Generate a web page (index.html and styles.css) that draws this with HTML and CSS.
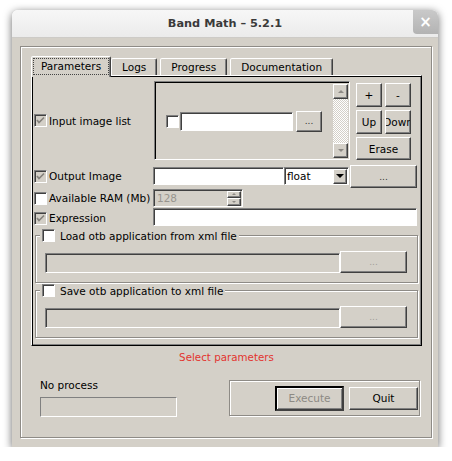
FILE: index.html
```html
<!DOCTYPE html>
<html>
<head>
<meta charset="utf-8">
<title>Band Math - 5.2.1</title>
<link rel="stylesheet" href="styles.css">
</head>
<body>
<div class="window">
	<div class="titlebar">
		<span class="title">Band Math – 5.2.1</span>
		<span class="close">×</span>
	</div>
	<div class="client">
		<div class="frame">
			<div class="tabs">
				<div class="tab active"><span class="focus">Parameters</span></div>
				<div class="tab">Logs</div>
				<div class="tab">Progress</div>
				<div class="tab">Documentation</div>
			</div>
			<div class="pane">
				<div class="form">
					<!-- input image list -->
					<label class="lbl tall"><span class="cb dis"><svg viewBox="0 0 11 11" width="11" height="11"><polyline points="2,5 4,7.5 9,2.5"/></svg></span>Input image list</label>
					<div class="listbox sunk">
						<div class="list-item">
							<span class="cb"></span>
							<span class="edit sunk item-edit"></span>
							<span class="btn dots item-btn">...</span>
						</div>
						<div class="vscroll">
							<span class="btn sb-btn"><i class="tri up"></i></span>
							<span class="sb-track"></span>
							<span class="btn sb-btn"><i class="tri down"></i></span>
						</div>
					</div>
					<div class="list-btns">
						<span class="btn">+</span>
						<span class="btn">-</span>
						<span class="btn">Up</span>
						<span class="btn">Down</span>
						<span class="btn wide">Erase</span>
					</div>

					<!-- output image -->
					<label class="lbl"><span class="cb dis"><svg viewBox="0 0 11 11" width="11" height="11"><polyline points="2,5 4,7.5 9,2.5"/></svg></span>Output Image</label>
					<div class="field-row">
						<span class="edit sunk out-edit"></span>
						<span class="combo sunk"><span class="combo-text">float</span><span class="btn combo-btn"><i class="tri down dark"></i></span></span>
					</div>
					<span class="btn dots out-btn">...</span>

					<!-- ram -->
					<label class="lbl"><span class="cb"></span>Available RAM (Mb)</label>
					<div class="field-row">
						<span class="spin sunk"><span class="spin-text">128</span><span class="spin-btns"><span class="btn"><i class="tri up small"></i></span><span class="btn"><i class="tri down small"></i></span></span></span>
					</div>
					<span></span>

					<!-- expression -->
					<label class="lbl"><span class="cb dis"><svg viewBox="0 0 11 11" width="11" height="11"><polyline points="2,5 4,7.5 9,2.5"/></svg></span>Expression</label>
					<span class="edit sunk expr-edit"></span>
				</div>

				<fieldset class="group">
					<legend><span class="cb"></span>Load otb application from xml file</legend>
					<span class="sunk file-edit"></span>
					<span class="btn dots file-btn">...</span>
				</fieldset>
				<fieldset class="group">
					<legend><span class="cb"></span>Save otb application to xml file</legend>
					<span class="sunk file-edit"></span>
					<span class="btn dots file-btn">...</span>
				</fieldset>
			</div>

			<div class="status">Select parameters</div>

			<div class="bottom">
				<div class="proc">
					<div>No process</div>
					<div class="bar"></div>
				</div>
				<div class="actions">
					<span class="btn default">Execute</span>
					<span class="btn quit">Quit</span>
				</div>
			</div>
		</div>
	</div>
</div>
</body>
</html>
```

FILE: styles.css
```css
body{
	margin:0;
	background:#fff;
	font:10.5px "DejaVu Sans",sans-serif;
	color:#000;
}
.window{
	margin:10px 0 0 12px;
	width:426px;
	height:437px;
	border-radius:6px 6px 0 0;
	box-shadow:0 2px 9px rgba(0,0,0,.6);
	overflow:hidden;
	display:flex;
	flex-direction:column;
}
.titlebar{
	position:relative;
	height:27px;
	flex:none;
	display:flex;
	align-items:center;
	justify-content:center;
	background:linear-gradient(#f7f7f7,#ebebeb);
	border-bottom:1px solid #cdcbc7;
}
.title{
	font-weight:bold;
	font-size:11.3px;
	color:#3a3a3a;
}
.close{
	position:absolute;
	right:0;
	top:0;
	width:25px;
	height:24px;
	border-radius:0 0 0 4px;
	background:linear-gradient(#c9c9c9,#b3b3b3);
	color:#fff;
	font-weight:bold;
	font-size:15px;
	display:flex;
	align-items:center;
	justify-content:center;
}
.client{
	flex:1;
	background:#d4d0c8;
	padding:8px 8px 9px 8px;
	display:flex;
}
.frame{
	flex:1;
	border:1px solid #8e8b86;
	box-shadow:1px 1px 0 #fff,inset 1px 1px 0 #fff;
	padding:9px 9px 0 10px;
	display:flex;
	flex-direction:column;
}

/* 3d bits */
.btn{
	box-sizing:border-box;
	background:#d4d0c8;
	border:1px solid;
	border-color:#fff #404040 #404040 #fff;
	box-shadow:inset -1px -1px 0 #808080;
	display:flex;
	align-items:center;
	justify-content:center;
	overflow:hidden;
	white-space:nowrap;
}
.sunk{
	box-sizing:border-box;
	border:1px solid;
	border-color:#808080 #fff #fff #808080;
	box-shadow:inset 1px 1px 0 #404040;
}
.edit{
	background:#fff;
	display:block;
}
.dots{
	font-size:9px;
	color:#333;
}
.cb{
	box-sizing:border-box;
	width:13px;
	height:13px;
	flex:none;
	border:1px solid;
	border-color:#808080 #fff #fff #808080;
	box-shadow:inset 1px 1px 0 #404040;
	background:#fff;
}
.cb svg{
	display:block;
	fill:none;
	stroke:#85827c;
	stroke-width:1.7;
}
.cb.dis{
	background:#d4d0c8;
}
.tri{
	width:0;
	height:0;
	border-left:3px solid transparent;
	border-right:3px solid transparent;
}
.tri.up{
	border-bottom:3px solid #8d8a85;
}
.tri.down{
	border-top:3px solid #8d8a85;
}
.tri.dark{
	border-left-width:4px;
	border-right-width:4px;
	border-top:4px solid #000;
}
.tri.small{
	border-left-width:2px;
	border-right-width:2px;
}
.tri.small.up{
	border-bottom-width:2px;
}
.tri.small.down{
	border-top-width:2px;
}

/* tabs */
.tabs{
	display:flex;
	align-items:flex-end;
	height:21px;
	margin-bottom:-2px;
	position:relative;
	z-index:1;
}
.tab{
	height:16px;
	line-height:16px;
	padding:0 10px;
	margin:0 3px 2px 0;
	background:#d4d0c8;
	border:1px solid;
	border-bottom:0;
	border-color:#fff #404040 transparent #fff;
	box-shadow:inset -1px 0 0 #808080;
	border-radius:2px 2px 0 0;
}
.tab.active{
	height:20px;
	margin:0;
	padding:0 1px;
	display:flex;
	align-items:flex-start;
}
.tab.active .focus{
	margin-top:1px;
	padding:0 7px;
	height:15px;
	line-height:15px;
	border:1px dotted #444;
}
.pane{
	height:271px;
	box-sizing:border-box;
	border:1px solid;
	border-color:#fff #000 #000 #fff;
	box-shadow:inset 1px 1px 0 #000,inset -1px -1px 0 #808080;
	padding:5px 2px 0 2px;
}

/* form grid */
.form{
	display:grid;
	grid-template-columns:119px 197px 69px;
	grid-template-rows:82px 22px 18px 18px;
	row-gap:2px;
}
.lbl{
	display:flex;
	align-items:center;
	gap:2px;
	white-space:nowrap;
}
.lbl.tall{
	height:79px;
}
.listbox{
	margin-left:1px;
	height:79px;
	display:flex;
	box-shadow:inset 1px 1px 0 #000;
	padding:2px 1px 1px 2px;
}
.list-item{
	flex:1;
	display:flex;
	align-items:center;
	padding:0 0 0 9px;
}
.item-edit{
	width:113px;
	height:19px;
	margin-left:1px;
}
.item-btn{
	width:26px;
	height:21px;
	margin-left:3px;
}
.vscroll{
	width:15px;
	display:flex;
	flex-direction:column;
}
.sb-btn{
	height:15px;
	flex:none;
}
.sb-track{
	flex:1;
	background:repeating-conic-gradient(#fff 0 25%,#d4d0c8 0 50%) 0 0/2px 2px;
}
.list-btns{
	margin:2px 0 0 6px;
	display:grid;
	grid-template-columns:26px 26px;
	grid-template-rows:24px 24px 23px;
	gap:3px;
	align-self:start;
}
.list-btns .wide{
	grid-column:span 2;
}
.field-row{
	display:flex;
	align-items:center;
}
.out-edit{
	width:131px;
	height:18px;
}
.combo{
	width:65px;
	height:18px;
	background:#fff;
	display:flex;
	align-items:center;
	padding:1px 1px 1px 2px;
}
.combo-text{
	flex:1;
}
.combo-btn{
	width:14px;
	height:15px;
}
.out-btn{
	width:67px;
	height:23px;
}
.spin{
	width:90px;
	height:18px;
	background:#d4d0c8;
	display:flex;
	align-items:center;
	padding:1px 1px 1px 3px;
}
.spin-text{
	flex:1;
	color:#98958f;
}
.spin-btns{
	width:14px;
	display:flex;
	flex-direction:column;
	height:15px;
}
.spin-btns .btn{
	flex:1;
}
.expr-edit{
	grid-column:span 2;
	width:264px;
	height:18px;
	margin-top:-1px;
}

/* group boxes */
.group{
	margin:2px 1px 0;
	padding:9px;
	border:1px solid #8e8b86;
	box-shadow:inset 1px 1px 0 #fff,1px 1px 0 #fff;
	display:flex;
	align-items:flex-end;
}
.group + .group{
	margin-top:1px;
}
.group legend{
	margin-left:-5px;
	padding:0 2px;
	background:#d4d0c8;
	display:flex;
	align-items:center;
	gap:5px;
	height:13px;
}
.file-edit{
	width:295px;
	height:20px;
	background:#d4d0c8;
}
.file-btn{
	width:67px;
	height:22px;
	color:#a19e98;
}

/* bottom */
.status{
	margin-top:5px;
	text-align:center;
	color:#e3342f;
	font-size:10.3px;
	line-height:13px;
}
.bottom{
	margin-top:16px;
	display:flex;
	justify-content:space-between;
	align-items:flex-start;
	padding:0 2px 0 9px;
}
.proc{
	margin-top:-1px;
}
.bar{
	margin-top:6px;
	width:137px;
	height:20px;
	box-sizing:border-box;
	border:1px solid;
	border-color:#808080 #fff #fff #808080;
}
.actions{
	width:191px;
	height:36px;
	box-sizing:border-box;
	border:1px solid #8e8b86;
	box-shadow:inset 1px 1px 0 #fff,1px 1px 0 #fff;
	display:flex;
	justify-content:flex-end;
	align-items:center;
	gap:5px;
	padding:0 1px 0 0;
}
.actions .default{
	width:69px;
	height:25px;
	color:#8d8a84;
	border-width:2px;
	border-color:#000 #404040 #404040 #000;
	box-shadow:inset 1px 1px 0 #fff,inset -1px -1px 0 #808080;
}
.actions .quit{
	width:69px;
	height:23px;
}
```
